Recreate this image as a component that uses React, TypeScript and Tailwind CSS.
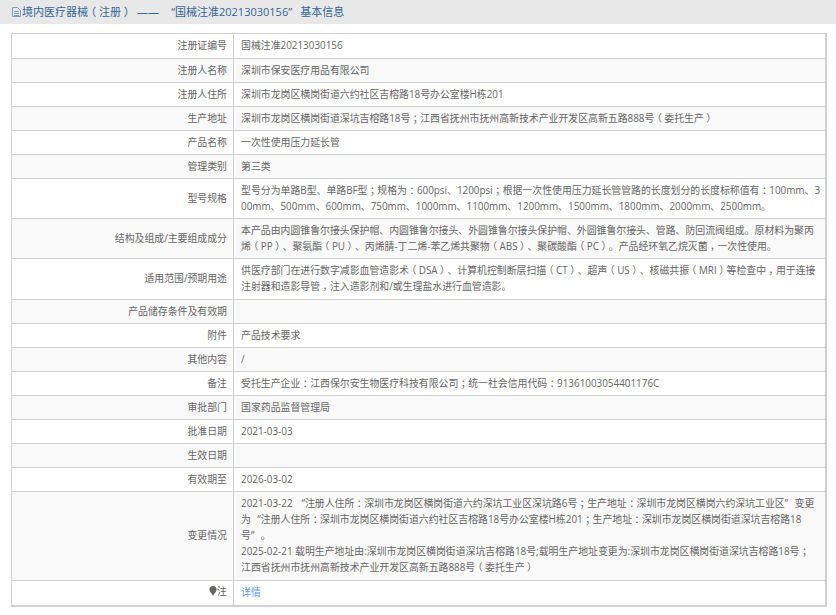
const rows: [string, string[], number][] = [
  ['注册证编号', ['国械注准20213030156'], 25],
  ['注册人名称', ['深圳市保安医疗用品有限公司'], 24],
  ['注册人住所', ['深圳市龙岗区横岗街道六约社区吉榕路18号办公室楼H栋201'], 24],
  ['生产地址', ['深圳市龙岗区横岗街道深坑吉榕路18号；江西省抚州市抚州高新技术产业开发区高新五路888号（委托生产）'], 24],
  ['产品名称', ['一次性使用压力延长管'], 24],
  ['管理类别', ['第三类'], 24],
  [
    '型号规格',
    [
      '型号分为单路B型、单路BF型；规格为：600psi、1200psi；根据一次性使用压力延长管管路的长度划分的长度标称值有：100mm、3',
      '00mm、500mm、600mm、750mm、1000mm、1100mm、1200mm、1500mm、1800mm、2000mm、2500mm。',
    ],
    40,
  ],
  [
    '结构及组成/主要组成成分',
    [
      '本产品由内圆锥鲁尔接头保护帽、内圆锥鲁尔接头、外圆锥鲁尔接头保护帽、外圆锥鲁尔接头、管路、防回流阀组成。原材料为聚丙',
      '烯（PP）、聚氨酯（PU）、丙烯腈-丁二烯-苯乙烯共聚物（ABS）、聚碳酸酯（PC）。产品经环氧乙烷灭菌，一次性使用。',
    ],
    40,
  ],
  [
    '适用范围/预期用途',
    [
      '供医疗部门在进行数字减影血管造影术（DSA）、计算机控制断层扫描（CT）、超声（US）、核磁共振（MRI）等检查中，用于连接',
      '注射器和造影导管，注入造影剂和/或生理盐水进行血管造影。',
    ],
    41,
  ],
  ['产品储存条件及有效期', [''], 24],
  ['附件', ['产品技术要求'], 24],
  ['其他内容', ['/'], 24],
  ['备注', ['受托生产企业：江西保尔安生物医疗科技有限公司；统一社会信用代码：91361003054401176C'], 24],
  ['审批部门', ['国家药品监督管理局'], 24],
  ['批准日期', ['2021-03-03'], 24],
  ['生效日期', [''], 24],
  ['有效期至', ['2026-03-02'], 24],
  [
    '变更情况',
    [
      '2021-03-22 “注册人住所：深圳市龙岗区横岗街道六约深坑工业区深坑路6号；生产地址：深圳市龙岗区横岗六约深坑工业区”变更',
      '为“注册人住所：深圳市龙岗区横岗街道六约社区吉榕路18号办公室楼H栋201；生产地址：深圳市龙岗区横岗街道深坑吉榕路18',
      '号”。',
      '2025-02-21 载明生产地址由:深圳市龙岗区横岗街道深坑吉榕路18号;载明生产地址变更为:深圳市龙岗区横岗街道深坑吉榕路18号；',
      '江西省抚州市抚州高新技术产业开发区高新五路888号（委托生产）',
    ],
    89,
  ],
];

// the reference font centres these marks in their em box
const halfMark = "mx-[0.25em] [font-feature-settings:'halt']";
const punctClass: Record<string, string> = {
  '（': halfMark,
  '）': halfMark,
  '；': halfMark,
  '：': halfMark,
  '，': halfMark,
  '“': 'ml-[0.65em]',
  '”': 'mr-[0.65em]',
};

function Text({ value }: { value: string }) {
  return (
    <>
      {value.split(/([（）；：，“”])/).map((part, i) =>
        punctClass[part] ? (
          <span key={i} className={punctClass[part]}>
            {part}
          </span>
        ) : (
          part
        ),
      )}
    </>
  );
}

function Row({ label, lines, height, alt }: { label: string; lines: string[]; height: number; alt: boolean }) {
  return (
    <tr className={alt ? 'bg-[#f9f9f9]' : 'bg-white'} style={{ height }}>
      <td className="w-[222px] border border-[#d0d0d0] pr-[6px] pb-[2px] text-right align-middle">{label}</td>
      <td className="border border-[#d0d0d0] pl-[7px] pb-[2px] align-middle whitespace-nowrap">
        {lines.map((line, i) => (
          <div key={i}>
            <Text value={line} />
          </div>
        ))}
      </td>
    </tr>
  );
}

export default function App() {
  return (
    <div className="h-[615px] w-[836px] overflow-hidden bg-white font-['Open_Sans','Noto_Sans_CJK_SC',sans-serif] text-[9.9px] leading-[16px] text-[#666]">
      <div className="flex h-[24px] items-center bg-[#e8e8e8] pl-[11px] text-[11px] text-[#336699]">
        <svg width="11" height="12" viewBox="0 0 11 12" fill="none" stroke="#7a9cc0" strokeWidth="1" className="shrink-0">
          <path d="M1.5 1.5h5l3 3v6h-8z" />
          <path d="M3 5.5h5M3 7.5h5M3 9.5h5" />
        </svg>
        <span>
          <Text value="境内医疗器械（注册）" />
          <span className="mx-[5px]">——</span>
          <Text value="“国械注准20213030156”" />
          <span className="ml-[1px]">基本信息</span>
        </span>
      </div>
      <div className="pl-[11px] pr-[9px] pt-[9px]">
        <table className="w-full table-fixed border-collapse border-r-2 border-b-2 border-[#d0d0d0]">
          <tbody>
            {rows.map(([label, lines, height], i) => (
              <Row key={label} label={label} lines={lines} height={height} alt={i % 2 === 1} />
            ))}
            <tr className="bg-white" style={{ height: 25 }}>
              <td className="w-[222px] border border-[#d0d0d0] pr-[6px] pb-[2px] text-right align-middle">
                <span className="inline-flex items-center justify-end">
                  <svg width="8" height="10" viewBox="0 0 8 10" fill="#666">
                    <path d="M4 0a3.6 3.6 0 0 1 3.6 3.6C7.6 5.6 5 8 4 10 3 8 .4 5.6.4 3.6A3.6 3.6 0 0 1 4 0z" />
                  </svg>
                  注
                </span>
              </td>
              <td className="border border-[#d0d0d0] pl-[7px] pb-[2px] align-middle text-[#5599ff]">详情</td>
            </tr>
          </tbody>
        </table>
      </div>
    </div>
  );
}
